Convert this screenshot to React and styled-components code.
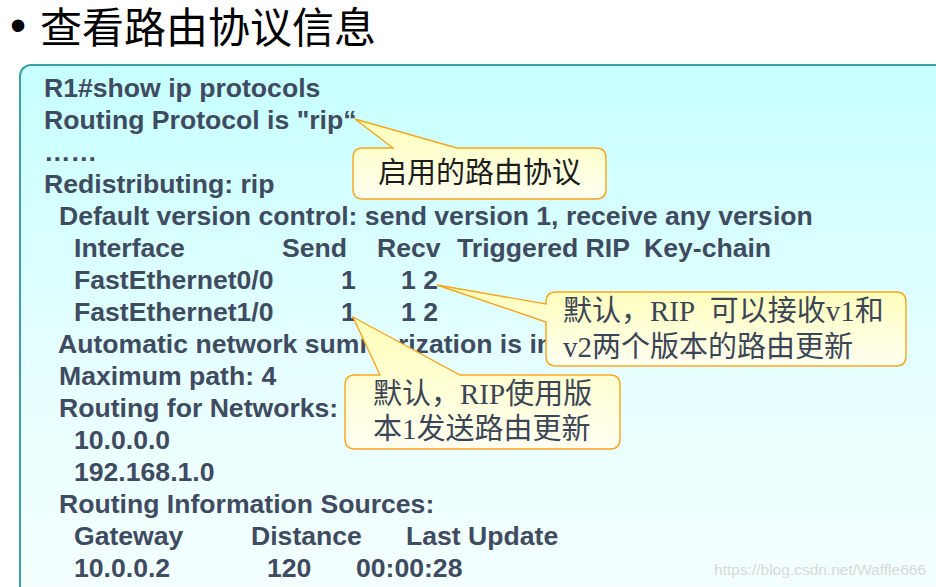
import React from 'react';
import styled, { createGlobalStyle } from 'styled-components';

const GlobalStyle = createGlobalStyle`
  html, body { margin: 0; padding: 0; background: #fff; }
  body { overflow: hidden; }
`;

const Page = styled.div`
  position: relative;
  width: 936px;
  height: 587px;
  overflow: hidden;
  background: #fff;
  font-family: "Liberation Sans", Arial, sans-serif;
`;

const Title = styled.div`
  display: flex;
  align-items: center;
  height: 50px;
  padding-left: 10px;
`;

const Bullet = styled.span`
  width: 30px;
  font-family: "Liberation Sans", Arial, sans-serif;
  font-size: 46px;
  line-height: 50px;
  color: #000;
`;

const TitleText = styled.h1`
  margin: 0;
  font-family: "Noto Sans CJK SC", sans-serif;
  font-weight: 400;
  font-size: 42px;
  line-height: 50px;
  color: #000;
`;

const Panel = styled.div`
  margin: 14px -40px 0 19px;
  min-height: 540px;
  padding: 6px 0 0 23px;
  border: 2px solid #3aa2a2;
  border-right: none;
  border-bottom: none;
  border-top-left-radius: 12px;
  background: linear-gradient(180deg, #c7ffff 0%, #e6ffff 55%, #f6ffff 100%);
`;

const Line = styled.div`
  display: flex;
  padding-left: ${p => p.$indent || 0}px;
  font-weight: 700;
  font-size: 26.6px;
  line-height: 32px;
  color: #3f4b60;
  white-space: pre;
`;

const Cell = styled.span`
  display: inline-block;
  width: ${p => p.$w}px;
`;

const Box = styled.div`
  position: absolute;
  left: ${p => p.$x}px;
  top: ${p => p.$y}px;
  width: ${p => p.$w}px;
  height: ${p => p.$h}px;
`;

const Shape = styled.svg`
  position: absolute;
  left: 0;
  top: 0;
  width: 100%;
  height: 100%;
  overflow: visible;
`;

const BoxText = styled.div`
  position: relative;
  box-sizing: border-box;
  height: 100%;
  padding: ${p => p.$pad};
  text-align: ${p => p.$align || 'left'};
  font-family: "Liberation Serif", "Noto Sans CJK SC", serif;
  font-size: 29px;
  line-height: ${p => p.$lh}px;
  color: ${p => p.$color};
  white-space: pre;
`;

const Watermark = styled.div`
  position: absolute;
  right: 10px;
  bottom: 8px;
  font-family: "Liberation Sans", Arial, sans-serif;
  font-size: 15.5px;
  color: #d6dada;
`;

function shapePath(w, h, r, t) {
  const [tx, ty] = t.tip;
  if (t.side === 'top') {
    return `M${r},0 L${t.a},0 L${tx},${ty} L${t.b},0 L${w - r},0 Q${w},0 ${w},${r} L${w},${h - r} Q${w},${h} ${w - r},${h} L${r},${h} Q0,${h} 0,${h - r} L0,${r} Q0,0 ${r},0 Z`;
  }
  return `M${r},0 L${w - r},0 Q${w},0 ${w},${r} L${w},${h - r} Q${w},${h} ${w - r},${h} L${r},${h} Q0,${h} 0,${h - r} L0,${t.b} L${tx},${ty} L0,${t.a} L0,${r} Q0,0 ${r},0 Z`;
}

function Callout({ id, x, y, w, h, tail, pad, lh, color, align, children }) {
  return (
    <Box $x={x} $y={y} $w={w} $h={h}>
      <Shape viewBox={`0 0 ${w} ${h}`}>
        <defs>
          <linearGradient id={id} x1="0" y1="0" x2="0" y2="1">
            <stop offset="0" stopColor="#ffffb8" />
            <stop offset="1" stopColor="#fffff2" />
          </linearGradient>
        </defs>
        <path d={shapePath(w, h, 10, tail)} fill={`url(#${id})`} stroke="#f7a51e" strokeWidth="1.4" />
      </Shape>
      <BoxText $pad={pad} $lh={lh} $color={color} $align={align}>{children}</BoxText>
    </Box>
  );
}

export default function App() {
  return (
    <Page>
      <GlobalStyle />
      <Title>
        <Bullet>•</Bullet>
        <TitleText>查看路由协议信息</TitleText>
      </Title>

      <Panel>
        <Line>R1#show ip protocols</Line>
        <Line>Routing Protocol is "rip“</Line>
        <Line>……</Line>
        <Line>Redistributing: rip</Line>
        <Line $indent={15}>Default version control: send version 1, receive any version</Line>
        <Line $indent={30}>
          <Cell $w={208}>Interface</Cell><Cell $w={95}>Send</Cell><Cell $w={80}>Recv</Cell>
          <Cell $w={187}>Triggered RIP</Cell><span>Key-chain</span>
        </Line>
        <Line $indent={30}>
          <Cell $w={267}>FastEthernet0/0</Cell><Cell $w={60}>1</Cell><span>1 2</span>
        </Line>
        <Line $indent={30}>
          <Cell $w={267}>FastEthernet1/0</Cell><Cell $w={60}>1</Cell><span>1 2</span>
        </Line>
        <Line $indent={14}>Automatic network summarization is in effect</Line>
        <Line $indent={15}>Maximum path: 4</Line>
        <Line $indent={15}>Routing for Networks:</Line>
        <Line $indent={30}>10.0.0.0</Line>
        <Line $indent={30}>192.168.1.0</Line>
        <Line $indent={15}>Routing Information Sources:</Line>
        <Line $indent={30}>
          <Cell $w={177}>Gateway</Cell><Cell $w={155}>Distance</Cell><span>Last Update</span>
        </Line>
        <Line $indent={30}>
          <Cell $w={193}>10.0.0.2</Cell><Cell $w={89}>120</Cell><span>00:00:28</span>
        </Line>
      </Panel>

      <Callout id="c1" x={353} y={148} w={253} h={51}
        tail={{ side: 'top', a: 40, b: 104, tip: [2, -29] }}
        pad="6px 0 0 0" lh={38} color="#1c1c1c" align="center">
        启用的路由协议
      </Callout>

      <Callout id="c2" x={546} y={292} w={360} h={74}
        tail={{ side: 'left', a: 12, b: 30, tip: [-109, -7] }}
        pad="1px 0 0 17px" lh={36} color="#3c4556">
        {'默认，RIP\u00a0\u00a0可以接收v1和\nv2两个版本的路由更新'}
      </Callout>

      <Callout id="c3" x={345} y={375} w={275} h={74}
        tail={{ side: 'top', a: 35, b: 115, tip: [8, -58] }}
        pad="2px 0 0 28px" lh={35} color="#3c4556">
        {'默认，RIP使用版\n本1发送路由更新'}
      </Callout>

      <Watermark>https://blog.csdn.net/Waffle666</Watermark>
    </Page>
  );
}
